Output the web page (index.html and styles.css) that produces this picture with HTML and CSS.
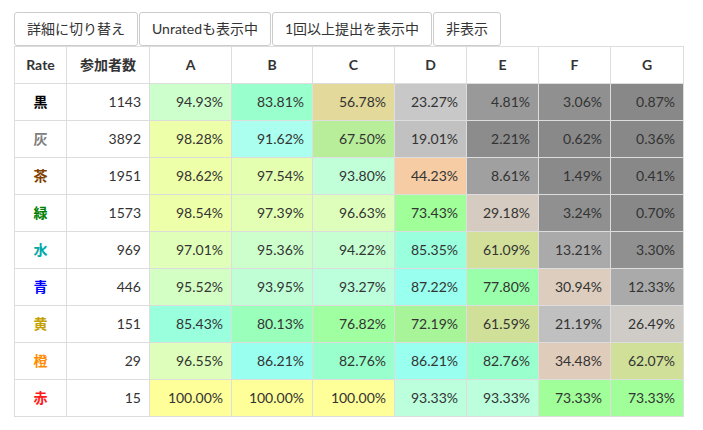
FILE: index.html
```html
<!DOCTYPE html>
<html lang="ja">
<head>
<meta charset="utf-8">
<link rel="stylesheet" href="styles.css">
</head>
<body>
<div class="page">
  <div class="toolbar">
    <button class="btn">詳細に切り替え</button>
    <button class="btn">Unratedも表示中</button>
    <button class="btn">1回以上提出を表示中</button>
    <button class="btn">非表示</button>
  </div>
  <table class="stats">
    <colgroup>
      <col class="c-rate"><col class="c-num">
      <col class="c-a"><col class="c-b"><col class="c-c">
      <col class="c-d"><col class="c-e"><col class="c-f"><col class="c-g">
    </colgroup>
    <thead>
      <tr><th>Rate</th><th>参加者数</th><th>A</th><th>B</th><th>C</th><th>D</th><th>E</th><th>F</th><th>G</th></tr>
    </thead>
    <tbody>
      <tr><th class="r-black">黒</th><td>1143</td>
        <td style="background:#ccffcc">94.93%</td><td style="background:#99ffcc">83.81%</td><td style="background:#e3d99a">56.78%</td><td style="background:#c8c8c8">23.27%</td><td style="background:#999999">4.81%</td><td style="background:#909090">3.06%</td><td style="background:#888888">0.87%</td></tr>
      <tr><th class="r-gray">灰</th><td>3892</td>
        <td style="background:#eeffaa">98.28%</td><td style="background:#aaffee">91.62%</td><td style="background:#b8ee99">67.50%</td><td style="background:#c1c1c1">19.01%</td><td style="background:#8c8c8c">2.21%</td><td style="background:#898989">0.62%</td><td style="background:#888888">0.36%</td></tr>
      <tr><th class="r-brown">茶</th><td>1951</td>
        <td style="background:#eeffaa">98.62%</td><td style="background:#e4ffb0">97.54%</td><td style="background:#c0ffd8">93.80%</td><td style="background:#f5cca3">44.23%</td><td style="background:#a0a0a0">8.61%</td><td style="background:#8a8a8a">1.49%</td><td style="background:#888888">0.41%</td></tr>
      <tr><th class="r-green">緑</th><td>1573</td>
        <td style="background:#eeffaa">98.54%</td><td style="background:#e2ffb4">97.39%</td><td style="background:#ddffbb">96.63%</td><td style="background:#a0ff99">73.43%</td><td style="background:#d5cbc0">29.18%</td><td style="background:#909090">3.24%</td><td style="background:#888888">0.70%</td></tr>
      <tr><th class="r-cyan">水</th><td>969</td>
        <td style="background:#e0ffb8">97.01%</td><td style="background:#ccffcc">95.36%</td><td style="background:#c5ffd2">94.22%</td><td style="background:#99ffdd">85.35%</td><td style="background:#d3e099">61.09%</td><td style="background:#aaaaaa">13.21%</td><td style="background:#909090">3.30%</td></tr>
      <tr><th class="r-blue">青</th><td>446</td>
        <td style="background:#d4ffc4">95.52%</td><td style="background:#c0ffd6">93.95%</td><td style="background:#bbffdd">93.27%</td><td style="background:#99ffee">87.22%</td><td style="background:#99ffaa">77.80%</td><td style="background:#dccdbe">30.94%</td><td style="background:#aaaaaa">12.33%</td></tr>
      <tr><th class="r-yellow">黄</th><td>151</td>
        <td style="background:#99ffdd">85.43%</td><td style="background:#99ffbb">80.13%</td><td style="background:#a0ffa0">76.82%</td><td style="background:#a8f599">72.19%</td><td style="background:#d0e099">61.59%</td><td style="background:#c0c0c0">21.19%</td><td style="background:#cfccc8">26.49%</td></tr>
      <tr><th class="r-orange">橙</th><td>29</td>
        <td style="background:#ddffbb">96.55%</td><td style="background:#99ffee">86.21%</td><td style="background:#99ffcc">82.76%</td><td style="background:#99ffee">86.21%</td><td style="background:#99ffcc">82.76%</td><td style="background:#e0ccbb">34.48%</td><td style="background:#d0e099">62.07%</td></tr>
      <tr><th class="r-red">赤</th><td>15</td>
        <td style="background:#ffff99">100.00%</td><td style="background:#ffff99">100.00%</td><td style="background:#ffff99">100.00%</td><td style="background:#bbffdd">93.33%</td><td style="background:#bbffdd">93.33%</td><td style="background:#a0ff99">73.33%</td><td style="background:#a0ff99">73.33%</td></tr>
    </tbody>
  </table>
</div>
</body>
</html>
```

FILE: styles.css
```css
html, body {
  margin: 0;
  padding: 0;
  background: #ffffff;
}
body {
  font-family: Lato, "Noto Sans CJK JP", sans-serif;
  font-size: 14px;
  line-height: 20px;
  color: #333333;
}
.page {
  padding: 12px 14px;
}
.toolbar {
  display: flex;
  gap: 1px;
}
.btn {
  font-family: Lato, "Noto Sans CJK JP", sans-serif;
  font-size: 14px;
  line-height: 20px;
  color: #333333;
  background: #ffffff;
  border: 1px solid #cccccc;
  border-radius: 3px;
  padding: 6px 12px;
  margin: 0;
}
.stats {
  border-collapse: collapse;
  table-layout: fixed;
  width: 670px;
}
.c-rate { width: 52px; }
.c-num { width: 83px; }
.c-a { width: 82px; }
.c-b { width: 81px; }
.c-c { width: 82px; }
.c-d, .c-e, .c-f { width: 72px; }
.c-g { width: 73px; }
.stats th, .stats td {
  border: 1px solid #dddddd;
  padding: 8px;
  height: 20px;
  white-space: nowrap;
}
.stats thead th {
  text-align: center;
  font-weight: bold;
}
.stats tbody th {
  text-align: center;
  font-weight: bold;
}
.stats td {
  text-align: right;
}
.r-black { color: #000000; }
.r-gray { color: #808080; }
.r-brown { color: #804000; }
.r-green { color: #008000; }
.r-cyan { color: #00a8a8; }
.r-blue { color: #0000ff; }
.r-yellow { color: #c4a000; }
.r-orange { color: #ff8c00; }
.r-red { color: #ff1a1a; }
```
